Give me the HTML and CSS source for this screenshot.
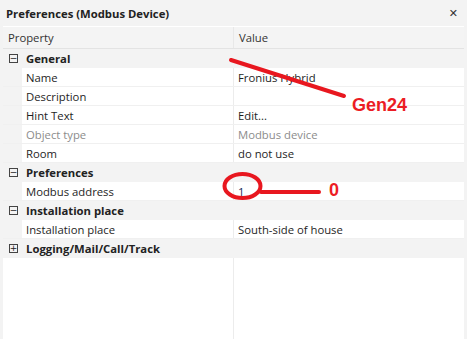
FILE: index.html
```html
<!DOCTYPE html>
<html lang="en">

<head>
    <meta charset="UTF-8">
    <title>Preferences (Modbus Device)</title>
    <link rel="stylesheet" href="styles.css">
</head>

<body>
    <div class="window">
        <div class="titlebar">
            <span class="title">Preferences (Modbus Device)</span>
            <span class="close">&#x2715;</span>
        </div>

        <div class="grid">
            <div class="head">
                <div class="hcell prop-col">Property</div>
                <div class="hcell">Value</div>
            </div>

            <div class="cat"><span class="toggle">&minus;</span>General</div>
            <div class="row"><div class="name">Name</div><div class="val">Fronius Hybrid</div></div>
            <div class="row"><div class="name">Description</div><div class="val"></div></div>
            <div class="row"><div class="name">Hint Text</div><div class="val">Edit...</div></div>
            <div class="row muted"><div class="name">Object type</div><div class="val">Modbus device</div></div>
            <div class="row"><div class="name">Room</div><div class="val">do not use</div></div>

            <div class="cat"><span class="toggle">&minus;</span>Preferences</div>
            <div class="row"><div class="name">Modbus address</div><div class="val num">1</div></div>

            <div class="cat"><span class="toggle">&minus;</span>Installation place</div>
            <div class="row"><div class="name">Installation place</div><div class="val">South-side of house</div></div>

            <div class="cat"><span class="toggle">+</span>Logging/Mail/Call/Track</div>

            <div class="filler">
                <div class="filler-prop"></div>
                <div></div>
            </div>
        </div>

        <!-- red marks drawn on top of the screenshot -->
        <svg class="marks" width="467" height="339" viewBox="0 0 467 339">
            <line x1="231" y1="60" x2="344" y2="96" />
            <ellipse cx="242.5" cy="186" rx="18" ry="12" />
            <line x1="261" y1="192" x2="319" y2="192" />
            <text x="352" y="111">Gen24</text>
            <text x="329" y="196">0</text>
        </svg>
    </div>
</body>

</html>
```

FILE: styles.css
```css
body {
    margin: 0;
}

.window {
    position: relative;
    width: 467px;
    height: 339px;
    background-color: #f3f3f3;
    font-family: "Open Sans", "Noto Sans", sans-serif;
    font-size: 11.3px;
    color: #1e1e1e;
    display: flex;
    flex-direction: column;
    overflow: hidden;
}

.titlebar {
    height: 26px;
    display: flex;
    align-items: center;
    justify-content: space-between;
    padding: 0 9px 0 6px;
    flex-shrink: 0;
}

.title {
    font-weight: bold;
    color: #222;
}

.close {
    font-family: "DejaVu Sans", sans-serif;
    font-size: 11px;
    color: #333;
}

.grid {
    flex: 1;
    margin: 0 3px;
    display: flex;
    flex-direction: column;
    background-color: #fff;
}

.head {
    display: flex;
    height: 21px;
    background-color: #f4f4f4;
    border-top: 1px solid #fff;
    border-bottom: 1px solid #e3e3e3;
    flex-shrink: 0;
}

.hcell {
    display: flex;
    align-items: center;
    padding-left: 5px;
    color: #333;
}

.prop-col {
    width: 225px;
    border-right: 1px solid #e8e8e8;
}

.filler-prop {
    width: 230px;
    border-right: 1px solid #ececec;
}

.cat {
    height: 18px;
    border-bottom: 1px solid #f3f3f3;
    background-color: #f3f3f3;
    display: flex;
    align-items: center;
    font-weight: bold;
    color: #222;
}

.toggle {
    width: 7px;
    height: 7px;
    border: 1px solid #444;
    margin: 0 8px 0 6px;
    display: flex;
    align-items: center;
    justify-content: center;
    font-family: "DejaVu Sans", sans-serif;
    font-size: 9px;
    font-weight: normal;
    line-height: 1;
}

.row {
    display: flex;
    height: 18px;
    padding-left: 19px;
    background-color: #f3f3f3;
    border-bottom: 1px solid #f0f0f0;
}

.name {
    width: 207px;
    padding-left: 4px;
    background-color: #fff;
    border-right: 1px solid #ececec;
    display: flex;
    align-items: center;
}

.val {
    flex: 1;
    padding-left: 4px;
    background-color: #fff;
    display: flex;
    align-items: center;
}

.muted .name,
.muted .val {
    color: #8c8c8c;
}

.num {
    color: #1d2a5a;
}

.filler {
    flex: 1;
    display: flex;
}

.marks {
    position: absolute;
    left: 0;
    top: 0;
}

.marks line,
.marks ellipse {
    stroke: #e8171f;
    stroke-width: 4;
    fill: none;
    stroke-linecap: round;
}

.marks text {
    fill: #ec1c24;
    font-family: "Liberation Sans", sans-serif;
    font-weight: bold;
    font-size: 18px;
}
```
